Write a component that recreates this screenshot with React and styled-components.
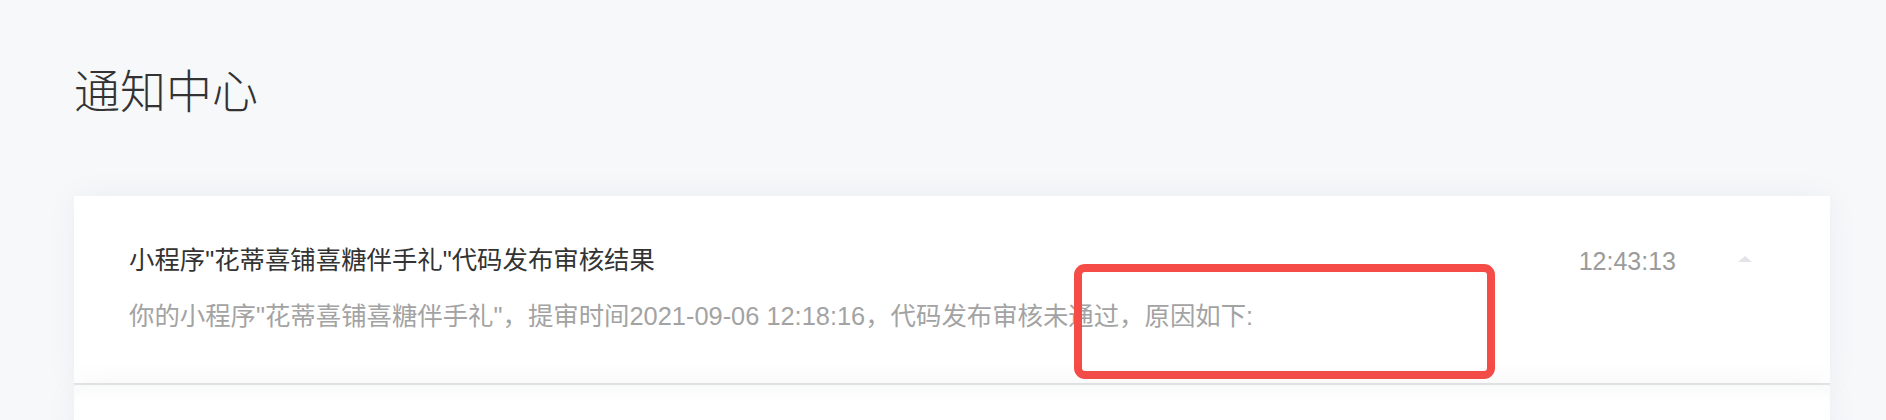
import React from 'react';
import styled, { createGlobalStyle } from 'styled-components';

const GlobalStyle = createGlobalStyle`
  html, body {
    margin: 0;
    padding: 0;
    background: #f7f8fa;
  }
  body {
    font-family: "Liberation Sans", "Noto Sans CJK SC", sans-serif;
    color: #333;
  }
`;

const Page = styled.div`
  padding: 65px 56px 0 74px;
`;

const Heading = styled.h1`
  margin: 0;
  font-family: "Noto Sans CJK SC", sans-serif;
  font-size: 46px;
  font-weight: 300;
  line-height: 46px;
  color: #333;
`;

const List = styled.div`
  margin-top: 85px;
  display: flex;
  flex-direction: column;
`;

const Card = styled.div`
  position: relative;
  background: #fff;
  box-shadow: 0 0 30px rgba(30, 40, 70, 0.05);
  border-bottom: 2px solid #e5e5e9;
  ${(p) => p.$faded && `
    box-shadow: inset 0 14px 18px -10px rgba(30, 40, 70, 0.045), 0 0 30px rgba(30, 40, 70, 0.05);
    border-bottom: none;
  `}
`;

const Row = styled.div`
  display: flex;
  align-items: flex-start;
  padding: 48px 78px 51px 55px;
  min-height: ${(p) => (p.$empty ? '40px' : 'auto')};
`;

const Main = styled.div`
  flex: 1;
  min-width: 0;
`;

const Title = styled.div`
  font-size: 25.4px;
  line-height: 32px;
  color: #333;
`;

const Summary = styled.div`
  margin-top: 24px;
  font-size: 25.4px;
  line-height: 32px;
  color: #a3a3a3;
`;

const Meta = styled.div`
  display: flex;
  align-items: center;
  gap: 62px;
  padding-top: 1px;
`;

const Time = styled.span`
  font-size: 25px;
  line-height: 32px;
  color: #9b9b9b;
`;

const Caret = styled.span`
  width: 0;
  height: 0;
  border-left: 7px solid transparent;
  border-right: 7px solid transparent;
  border-bottom: 6px solid #e3e3ea;
  margin-top: -4px;
`;

const Highlight = styled.div`
  position: absolute;
  left: 1000px;
  top: 68px;
  width: 421px;
  height: 115px;
  box-sizing: border-box;
  border: 8px solid #f64c48;
  border-radius: 11px;
  pointer-events: none;
`;

const notices = [
  {
    title: '小程序"花蒂喜铺喜糖伴手礼"代码发布审核结果',
    summary:
      '你的小程序"花蒂喜铺喜糖伴手礼"，提审时间2021-09-06 12:18:16，代码发布审核未通过，原因如下:',
    time: '12:43:13',
    marked: true,
  },
];

export default function App() {
  return (
    <>
      <GlobalStyle />
      <Page>
        <Heading>通知中心</Heading>
        <List>
          {notices.map((n) => (
            <Card key={n.time}>
              <Row>
                <Main>
                  <Title>{n.title}</Title>
                  <Summary>{n.summary}</Summary>
                </Main>
                <Meta>
                  <Time>{n.time}</Time>
                  <Caret />
                </Meta>
              </Row>
              {n.marked && <Highlight />}
            </Card>
          ))}
          <Card $faded>
            <Row $empty />
          </Card>
        </List>
      </Page>
    </>
  );
}
